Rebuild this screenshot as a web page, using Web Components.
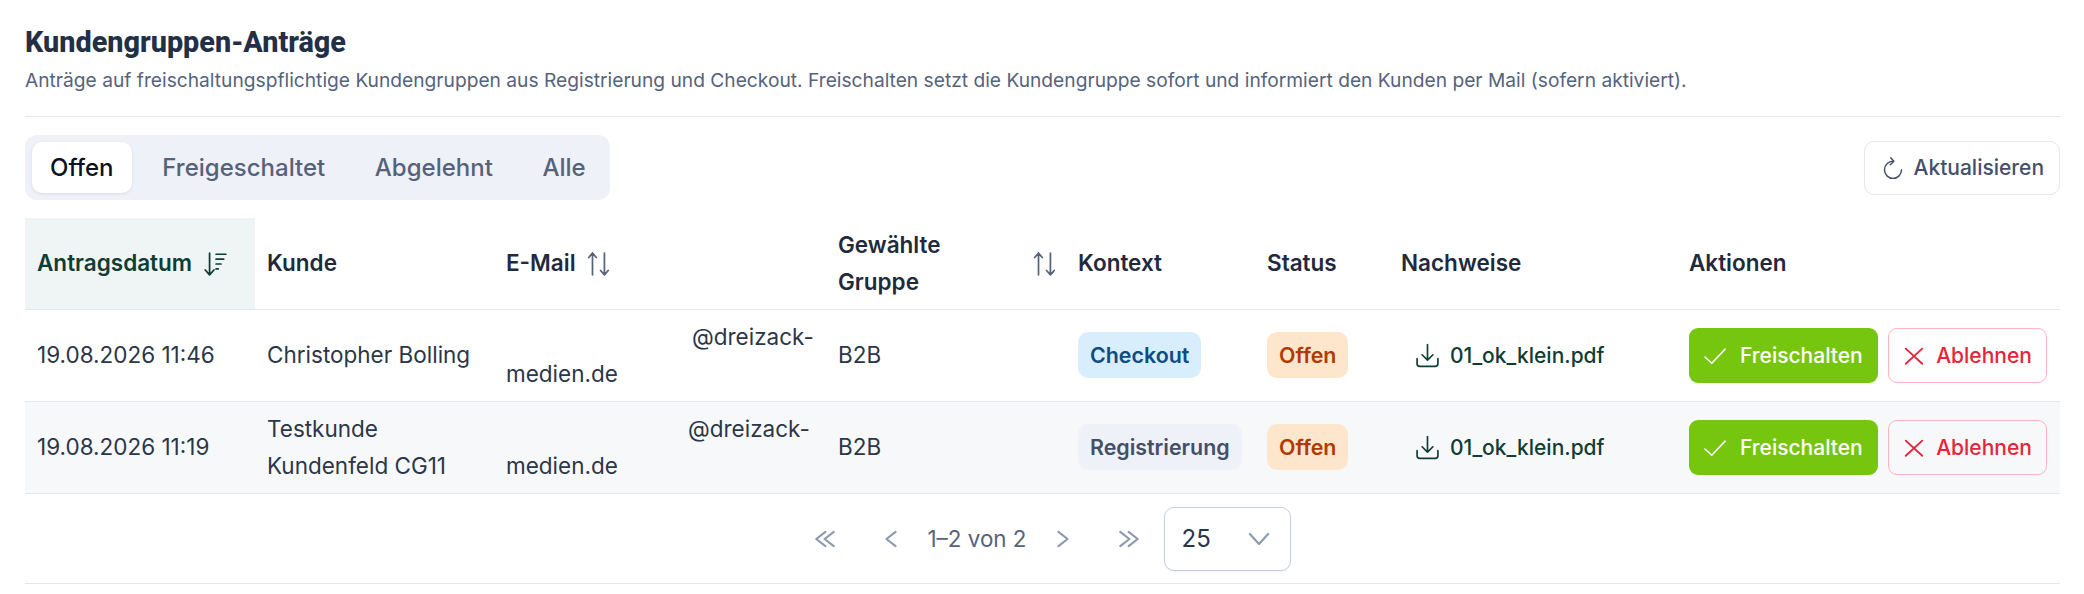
<!DOCTYPE html>
<html lang="de"><head><meta charset="utf-8"><title>Kundengruppen-Anträge</title>
<style>
html,body{margin:0;background:#fff}
body{font-family:Inter,"Liberation Sans",sans-serif;color:#2b3648}
</style></head><body>
<kg-page>
  <kg-heading title-text="Kundengruppen-Anträge">Anträge auf freischaltungspflichtige Kundengruppen aus Registrierung und Checkout. Freischalten setzt die Kundengruppe sofort und informiert den Kunden per Mail (sofern aktiviert).</kg-heading>
  <kg-toolbar>
    <kg-tabs><kg-tab active>Offen</kg-tab><kg-tab>Freigeschaltet</kg-tab><kg-tab>Abgelehnt</kg-tab><kg-tab>Alle</kg-tab></kg-tabs>
    <kg-refresh>Aktualisieren</kg-refresh>
  </kg-toolbar>
  <kg-table>
    <kg-row head>
      <kg-cell th sorted>Antragsdatum<kg-icon name="sortdown"></kg-icon></kg-cell>
      <kg-cell th>Kunde</kg-cell>
      <kg-cell th>E-Mail<kg-icon name="sort"></kg-icon></kg-cell>
      <kg-cell th spread><span>Gewählte<br>Gruppe</span><kg-icon name="sort"></kg-icon></kg-cell>
      <kg-cell th>Kontext</kg-cell>
      <kg-cell th>Status</kg-cell>
      <kg-cell th>Nachweise</kg-cell>
      <kg-cell th>Aktionen</kg-cell>
    </kg-row>
    <kg-row>
      <kg-cell>19.08.2026 11:46</kg-cell>
      <kg-cell>Christopher Bolling</kg-cell>
      <kg-cell><kg-mail style="--gap:186px"></kg-mail></kg-cell>
      <kg-cell>B2B</kg-cell>
      <kg-cell><kg-badge tone="info">Checkout</kg-badge></kg-cell>
      <kg-cell><kg-badge tone="warn">Offen</kg-badge></kg-cell>
      <kg-cell><kg-file>01_ok_klein.pdf</kg-file></kg-cell>
      <kg-cell><kg-actions></kg-actions></kg-cell>
    </kg-row>
    <kg-row alt>
      <kg-cell>19.08.2026 11:19</kg-cell>
      <kg-cell><span>Testkunde<br>Kundenfeld CG11</span></kg-cell>
      <kg-cell><kg-mail style="--gap:182px"></kg-mail></kg-cell>
      <kg-cell>B2B</kg-cell>
      <kg-cell><kg-badge tone="plain">Registrierung</kg-badge></kg-cell>
      <kg-cell><kg-badge tone="warn">Offen</kg-badge></kg-cell>
      <kg-cell><kg-file>01_ok_klein.pdf</kg-file></kg-cell>
      <kg-cell><kg-actions></kg-actions></kg-cell>
    </kg-row>
  </kg-table>
  <kg-pager></kg-pager>
</kg-page>
<script>
const def=(name,html)=>{
  customElements.define(name,class extends HTMLElement{
    constructor(){super();this.attachShadow({mode:'open'});}
    connectedCallback(){this.shadowRoot.innerHTML=typeof html==='function'?html(this):html;}
  });
};
const ICONS={
 sort:`<path d="M6 22V2M6 2 2.5 6M6 2l3.5 4M17 2v20M17 22l-3.5-4M17 22l3.5-4" />`,
 sortdown:`<path d="M7 2v20M7 22l-4-4.5M7 22l4-4.5" /><path d="M13 3h9M13 7.5h7M13 12h4.5M13 16.5h2" />`,
 refresh:`<path d="M12 4.7A9.3 9.3 0 1 0 21.3 14" /><path d="M9.5 .8 13 4.7 9 8.5" />`,
 download:`<path d="M12 1.5v15M6.8 11.3l5.2 5.2 5.2-5.2" /><path d="M2 15v5a2.5 2.5 0 0 0 2.5 2.5h15A2.5 2.5 0 0 0 22 20v-5" />`,
 check:`<path d="M1 13 8.5 20 23 4.5" />`,
 x:`<path d="M3 4 21 20.5M21 4 3 20.5" />`,
 dleft:`<path d="M12.5 3.5 1.5 12l11 8.5M22.5 3.5 11.5 12l11 8.5" />`,
 left:`<path d="M17.5 3.5 6.5 12l11 8.5" />`,
 right:`<path d="M6.5 3.5 17.5 12 6.5 20.5" />`,
 dright:`<path d="M1.5 3.5 12.5 12 1.5 20.5M11.5 3.5 22.5 12l-11 8.5" />`,
 chev:`<path d="M1 6 12 18 23 6" />`
};
def('kg-icon',h=>`<style>:host{display:inline-flex;flex:none;width:var(--s,22px);height:var(--s,22px)}svg{width:100%;height:100%;fill:none;stroke:currentColor;stroke-width:var(--w,1.6);stroke-linecap:round;stroke-linejoin:round;overflow:visible}</style><svg viewBox="0 0 24 24">${ICONS[h.getAttribute('name')]}</svg>`);
def('kg-page',`<style>:host{display:block;padding:0 24px 0 25px;box-sizing:border-box;width:2084px;height:594px;overflow:hidden}</style><slot></slot>`);
def('kg-heading',h=>`<style>:host{display:block;height:117px;box-sizing:border-box;border-bottom:1.5px solid #e2e6ef}
h1{margin:0;padding-top:24px;font:800 28.8px/37px Roboto,sans-serif;color:#232f45}
p{margin:0;padding-top:4px;font:400 19.2px/30px Inter,sans-serif;color:#56637c}</style><h1>${h.getAttribute('title-text')}</h1><p><slot></slot></p>`);
def('kg-toolbar',`<style>:host{display:flex;justify-content:space-between;align-items:center;height:101px;box-sizing:border-box}</style><slot></slot>`);
def('kg-tabs',`<style>:host{display:flex;background:#eef1f8;border-radius:12px;padding:7px 0 7px 7px;height:65px;box-sizing:border-box}</style><slot></slot>`);
def('kg-tab',h=>`<style>:host{display:flex;align-items:center;padding:0 24.8px;font:500 24px Inter,sans-serif;color:#56627a;border-radius:10px}
:host([active]){padding:0 18px;margin-right:6px;background:#fff;color:#0b1220;box-shadow:0 1px 3px rgba(20,30,60,.1)}</style><slot></slot>`);
def('kg-refresh',`<style>:host{display:flex;align-items:center;gap:9.5px;height:54px;width:196px;box-sizing:border-box;padding:0 0 0 17px;border:1.5px solid #e2e6ef;border-radius:10px;font:500 21px Inter,sans-serif;color:#44506a}</style><kg-icon name="refresh"></kg-icon><slot></slot>`);
def('kg-table',`<style>:host{display:block}</style><slot></slot>`);
def('kg-row',`<style>:host{display:grid;grid-template-columns:230px 239px 332px 240px 189px 134px 288px 1fr;height:92px;box-sizing:border-box;border-bottom:1.5px solid #e2e6ef}
:host([alt]){background:#f7f8fa}</style><slot></slot>`);
def('kg-cell',`<style>:host{display:flex;align-items:center;gap:10px;padding:0 12px;font:400 22.5px/36.5px Inter,sans-serif;color:#2b3648;min-width:0;white-space:nowrap;--s:26px}
:host([th]){font-weight:600;color:#1f2a3d}
:host([th]) ::slotted(kg-icon){color:#56637c}
:host([sorted]){background:#eff4f4;color:#0f3d33}
:host([sorted]) ::slotted(kg-icon){color:#0f3d33}
:host([spread]){justify-content:space-between;padding-right:8px}</style><slot></slot>`);
def('kg-mail',`<style>:host{display:block;line-height:36.5px;white-space:nowrap}i{display:inline-block;width:var(--gap)}</style><i></i>@dreizack-<br>medien.de`);
def('kg-badge',`<style>:host{display:inline-flex;align-items:center;height:46px;margin-bottom:2px;padding:0 12px;border-radius:10px;font:600 21.4px Inter,sans-serif;white-space:nowrap}
:host([tone=info]){background:#d9eefd;color:#0f4c81}:host([tone=warn]){background:#fee6cc;color:#b03a05}:host([tone=plain]){background:#eff1f8;color:#434f68}</style><slot></slot>`);
def('kg-file',`<style>:host{display:inline-flex;align-items:center;gap:10px;padding-left:14px;color:#0f3d33;font:500 21px Inter,sans-serif;--s:25px}</style><kg-icon name="download"></kg-icon><slot></slot>`);
def('kg-btn',`<style>:host{display:inline-flex;align-items:center;height:54.5px;box-sizing:border-box;border-radius:9px;font:500 21px Inter,sans-serif;white-space:nowrap;--s:22px}
:host([kind=ok]){gap:14px;padding:0 15px;background:#76c610;color:#fff}
:host([kind=no]){gap:11.5px;padding:0 14px;border:1.5px solid #ffb3ba;color:#e5243b;--w:2}</style><slot></slot>`);
def('kg-actions',`<style>:host{display:flex;gap:10px}</style><kg-btn kind="ok"><kg-icon name="check"></kg-icon>Freischalten</kg-btn><kg-btn kind="no"><kg-icon name="x"></kg-icon>Ablehnen</kg-btn>`);
def('kg-pager',`<style>:host{display:flex;justify-content:center;align-items:center;height:90px;padding-right:2px;box-sizing:border-box;border-bottom:1.5px solid #e2e6ef;font:400 22.4px Inter,sans-serif;color:#56637c;--s:20px;--w:2.6}
b{display:flex;justify-content:center;width:66px;color:#8d99ae;font-weight:400}b:first-child{width:68px}span{padding:0 3px}
.sel{display:flex;align-items:center;justify-content:space-between;width:127px;height:64px;box-sizing:border-box;margin-left:2px;padding:0 21px 0 17px;border:1.5px solid #c3cfe0;border-radius:10px;color:#2b3648;font-size:24px;box-shadow:0 1px 2px rgba(20,30,60,.06)}
.sel kg-icon{color:#8d99ae}</style>
<b><kg-icon name="dleft"></kg-icon></b><b><kg-icon name="left"></kg-icon></b><span>1–2 von 2</span><b><kg-icon name="right"></kg-icon></b><b><kg-icon name="dright"></kg-icon></b>
<div class="sel">25<kg-icon name="chev"></kg-icon></div>`);
</script>
</body></html>
